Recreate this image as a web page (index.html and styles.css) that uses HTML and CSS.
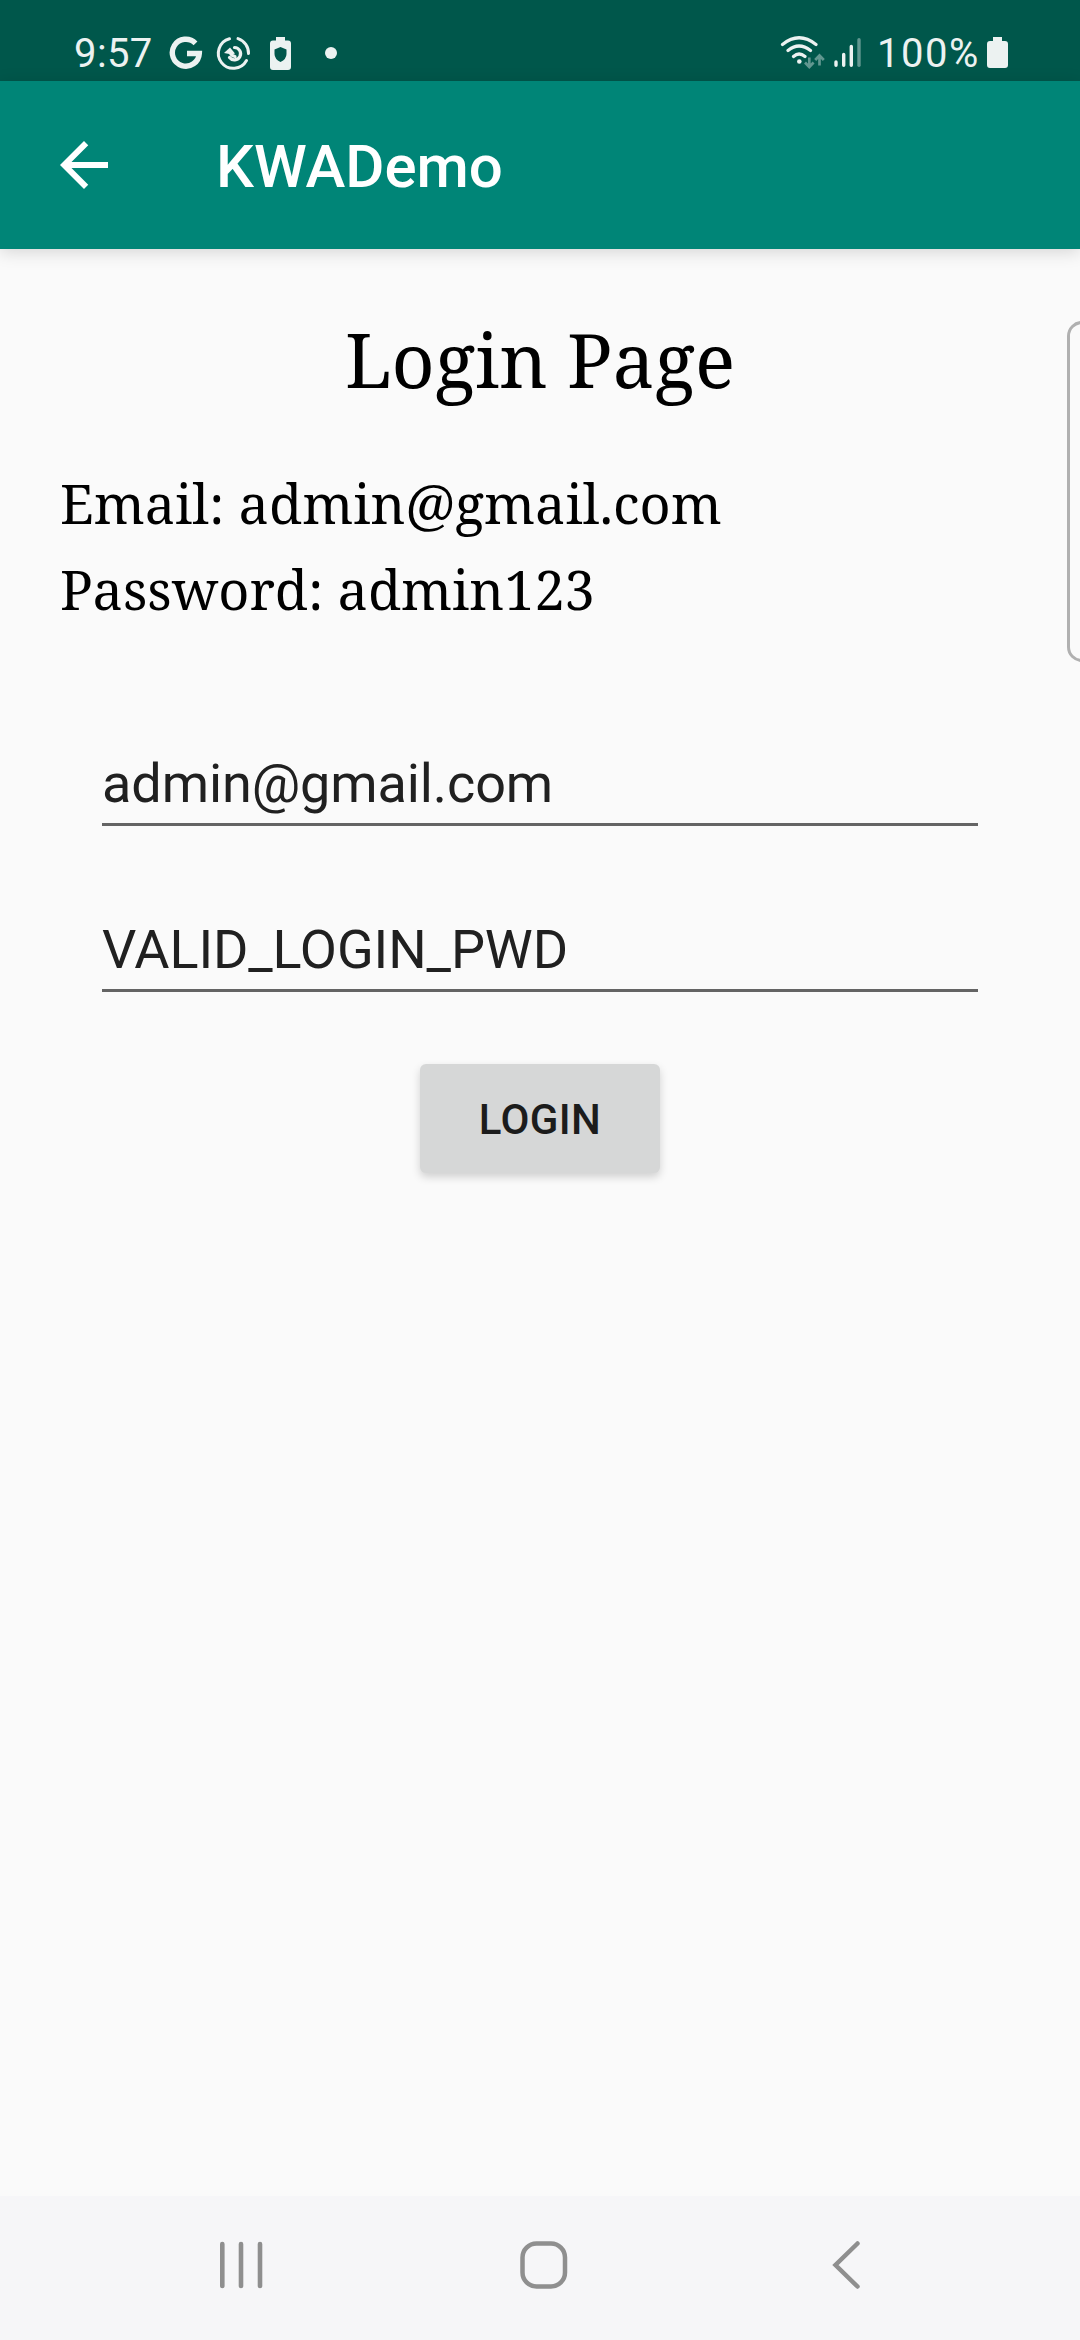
FILE: index.html
```html
<!DOCTYPE html>
<html lang="en">
<head>
<meta charset="utf-8">
<title>KWADemo</title>
<link rel="stylesheet" href="styles.css">
</head>
<body>
<div class="screen">
  <header class="status">
    <span class="clock">9:57</span>
    <svg class="notifications" width="240" height="40" viewBox="168 33 240 40">
      <g fill="none" stroke="#ecf2f1">
        <path d="M195.500 43.300A13.500 13.500 0 1 0 199.300 53.500H187" stroke-width="5.400"/>
        <g stroke-width="3" stroke-linecap="round">
          <path d="M229.500 38.800A15 15 0 1 0 246.500 60.500M238 38.600A15 15 0 0 1 248.500 53.500"/>
          <path d="M234.500 47.500A6.200 6.200 0 1 1 229.500 57.500M230.500 51V53Q231 55.500 235 56.500" stroke-width="3.200"/>
        </g>
      </g>
      <path d="M224 53L230 47.500L235 53.500L232 54.500Z" fill="#ecf2f1"/>
      <path fill="#ecf2f1" fill-rule="evenodd" d="M276 37h9v3.500h3q3 0 3 3V67q0 3-3 3h-15q-3 0-3-3V43.500q0-3 3-3h3zM280.500 47L274.500 49.500V54Q274.500 59 280.500 62Q286.500 59 286.500 54V49.500Z"/>
      <circle cx="331" cy="53" r="6" fill="#ecf2f1"/>
    </svg>
    <svg class="signals" width="90" height="40" viewBox="778 33 90 40">
      <g fill="none" stroke="#ecf2f1" stroke-width="3.200" stroke-linecap="round">
        <path d="M782.500 44.500Q799 31 816 44.500M788 50.500Q799 41.500 810.500 50.500M793.500 56.500Q799 51.500 805 56.500"/>
      </g>
      <circle cx="799.300" cy="61.500" r="2.300" fill="#ecf2f1"/>
      <g fill="none" stroke="#619790" stroke-width="2.700">
        <path d="M809.300 57.500V67M805 62.500L809.300 67L813.600 62.500M819.500 65.500V55.500M815.200 60L819.500 55.500L823.800 60"/>
      </g>
      <g stroke="#ecf2f1" stroke-width="3.400" stroke-linecap="round">
        <path d="M836 62V65.300M843.700 54.500V65.300M851.300 46.500V65.300"/>
        <path d="M859 39.700V65.300" stroke="#619790"/>
      </g>
    </svg>
    <span class="percent">100%</span>
    <svg class="battery" width="21" height="32" viewBox="0 0 21 32"><path fill="#ecf2f1" d="M6 0h9v4h3q3 0 3 3v21q0 3-3 3H3q-3 0-3-3V7q0-3 3-3h3z"/></svg>
  </header>
  <div class="toolbar">
    <svg class="back" width="72" height="72" viewBox="0 0 24 24"><path fill="#fff" d="M20 11H7.830l5.590-5.590L12 4l-8 8 8 8 1.410-1.410L7.830 13H20v-2z"/></svg>
    <span class="title">KWADemo</span>
  </div>
  <main class="content">
    <h1 class="heading">Login Page</h1>
    <p class="hint hint-email">Email: admin@gmail.com</p>
    <p class="hint hint-password">Password: admin123</p>
    <form class="form">
      <div class="field">admin@gmail.com</div>
      <div class="field">VALID_LOGIN_PWD</div>
      <button class="login" type="button">LOGIN</button>
    </form>
  </main>
  <nav class="navbar">
    <svg width="48" height="56" viewBox="0 0 48 56"><path d="M5.300 7V49M24 7V49M43 7V49" fill="none" stroke="#8f8f8f" stroke-width="4.600" stroke-linecap="round"/></svg>
    <svg width="48" height="56" viewBox="0 0 48 56"><rect x="2.500" y="6.500" width="42.500" height="43" rx="14" fill="none" stroke="#8f8f8f" stroke-width="4.500"/></svg>
    <svg width="48" height="56" viewBox="0 0 48 56"><path d="M35.500 6.500L13.500 28L35.500 49.500" fill="none" stroke="#8f8f8f" stroke-width="4.500" stroke-linecap="round"/></svg>
  </nav>
  <div class="edge-panel"></div>
</div>
</body>
</html>
```

FILE: styles.css
```css
* { box-sizing: border-box; }
body { margin: 0; background: #fafafa; font-family: Roboto, "Noto Sans", sans-serif; }
.screen { position: relative; display: flex; flex-direction: column; width: 1080px; height: 2340px; overflow: hidden; background: #fafafa; }
.status { display: flex; height: 81px; padding: 33px 72px 0 74px; background: #00574b; color: #ecf2f1; font-size: 40px; line-height: 41px; }
.clock { width: 94px; letter-spacing: .4px; }
.signals { margin-left: auto; }
.percent { width: 115px; padding-left: 9px; letter-spacing: 1.5px; }
.battery { margin: 4px 0 0 4px; }
.toolbar { display: flex; align-items: center; height: 168px; padding-left: 48px; background: #008577; box-shadow: 0 3px 16px rgba(0,0,0,.15); color: #fff; }
.title { margin-left: 96px; padding-top: 4px; font-size: 60px; font-weight: 500; line-height: 70px; white-space: nowrap; }
.content { flex: 1; display: flex; flex-direction: column; padding: 59px 60px 0; }
.heading, .hint { margin: 0; font-family: "Noto Serif", "DejaVu Serif Condensed", "DejaVu Serif", serif; color: #000; white-space: nowrap; }
.heading { font-size: 75px; font-weight: 400; line-height: 102px; text-align: center; }
.hint { font-size: 54px; line-height: 74px; }
.hint-email { margin-top: 56px; }
.hint-password { margin-top: 12px; }
.form { display: flex; flex-direction: column; align-items: center; margin-top: 121px; padding: 0 42px; }
.field { width: 100%; height: 79px; margin-bottom: 87px; border-bottom: 3px solid #646464; color: #202020; font-size: 54px; line-height: 74px; letter-spacing: -.1px; }
.login { width: 240px; height: 109px; margin-top: -15px; padding: 2px 0 0; border: 0; border-radius: 6px; background: #d6d7d7; box-shadow: 0 4px 8px rgba(0,0,0,.17); color: #1c1c1c; font: 500 42px/48px Roboto, sans-serif; letter-spacing: .4px; }
.navbar { display: flex; justify-content: space-between; align-items: center; height: 144px; padding: 0 210px 6px 217px; background: #f6f6f8; }
.edge-panel { position: absolute; left: 1067px; top: 321px; width: 40px; height: 341px; border: 3px solid #b0b0b0; border-radius: 15px; }
```
